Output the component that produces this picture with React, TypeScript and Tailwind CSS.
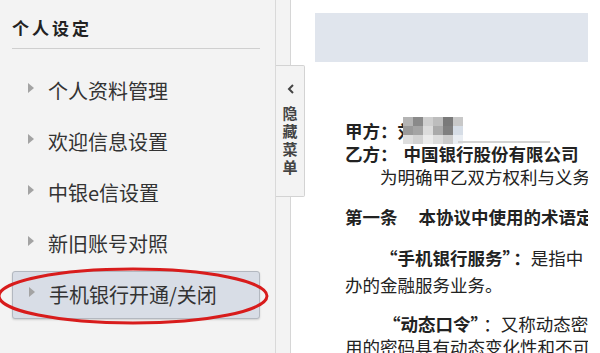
import React from "react";

const menuItems = ["个人资料管理", "欢迎信息设置", "中银e信设置", "新旧账号对照", "手机银行开通/关闭"];

const mosaic = [
  ["#b4b4b4", "#8a8a8a", "#cfcfcf", "#bdbdbd", "#7a7a7a", "#c8c8c8"],
  ["#9a9a9a", "#a4a4a4", "#dcdcdc", "#aaaaaa", "#808080", "#d6dde6"],
  ["#dedede", "#d2d2d2", "#ebebeb", "#dcdcdc", "#cbcbcb", "#e9edf2"],
];

function Triangle() {
  return <span className="mb-[7px] h-0 w-0 border-y-[5px] border-l-[6px] border-y-transparent border-l-[#a3a3a3]" />;
}

export default function App() {
  return (
    <div
      className="relative flex h-[353px] w-[600px] overflow-hidden bg-white text-[#222]"
      style={{ fontFamily: '"Noto Sans CJK SC", "Noto Sans", sans-serif' }}
    >
      {/* sidebar */}
      <aside className="relative w-[276px] shrink-0 border-r border-[#d9d9d9] bg-[#f3f3f3]">
        <div className="ml-[12px] w-[248px] border-b border-[#cfcfcf] pt-[16px] pb-[8px]">
          <h2 className="text-[17px] font-bold leading-[24px] tracking-[3px] text-[#222]">个人设定</h2>
        </div>
        <ul className="mt-[18px] flex flex-col gap-[3px]">
          {menuItems.map((item, i) => (
            <li
              key={item}
              className={`ml-[12px] flex h-[48px] w-[248px] items-center gap-[14px] rounded-[3px] pl-[16px] ${
                i === 4 ? "border border-[#b3b8c0] bg-[#d8dde6] shadow-[0_1px_2px_rgba(0,0,0,0.15)]" : ""
              }`}
            >
              <Triangle />
              <span className="text-[20px] leading-none text-[#333]">{item}</span>
            </li>
          ))}
        </ul>
        <svg className="absolute left-0 top-[264px]" width="276" height="64" viewBox="0 0 276 64">
          <ellipse cx="133" cy="32" rx="134" ry="27" fill="none" stroke="#d81c1c" strokeWidth="3" />
        </svg>
      </aside>

      {/* collapse strip */}
      <div className="w-[15px] shrink-0 border-r border-[#d6d6d6] bg-[#f3f3f3]" />

      {/* document */}
      <main className="flex-1 pt-[13px] pl-[24px]">
        <div className="w-[273px] overflow-hidden whitespace-nowrap text-[17.5px]">
          <div className="h-[49px] bg-[#e0e5ed]" />
          <div className="pl-[30px]">
            <div className="mt-[57px] leading-[23px] font-bold">
              甲方：
              <span className="relative">
                刘
                <span className="absolute left-[5px] top-[-1px] grid w-[60px] grid-cols-[repeat(6,10px)] blur-[0.7px]">
                  {mosaic.flat().map((c, i) => (
                    <span key={i} className="h-[9px] w-[10px]" style={{ background: c }} />
                  ))}
                </span>
                <span className="absolute left-[60px] top-[23px] h-[2px] w-[92px] bg-[#d3d3d3] blur-[0.5px]" />
              </span>
            </div>
            <div className="leading-[23px] font-bold">
              乙方：<span className="ml-[6px]">中国银行股份有限公司</span>
            </div>
            <div className="pl-[35px] leading-[23px]">为明确甲乙双方权利与义务</div>
            <div className="mt-[17px] leading-[23px] font-bold">
              第一条<span className="ml-[21px]">本协议中使用的术语定义</span>
            </div>
            <div className="mt-[18px] pl-[35px] leading-[23px]">
              <span className="font-bold">“手机银行服务”</span>
              <span className="ml-[2px] font-bold">：</span>
              <span>是指中</span>
            </div>
            <div className="mt-[4px] leading-[23px]">办的金融服务业务。</div>
            <div className="mt-[16px] pl-[38px] leading-[23px]">
              <span className="font-bold">“动态口令”</span>
              <span className="ml-[4px]">：</span>
              <span>又称动态密</span>
            </div>
            <div className="leading-[23px]">用的密码具有动态变化性和不可</div>
          </div>
        </div>
      </main>

      {/* hide menu tab */}
      <div className="absolute left-[276px] top-[65px] flex h-[132px] w-[29px] flex-col items-center rounded-r-[2px] border border-l-0 border-[#d3d3d3] bg-[#f3f3f3] pt-[18px]">
        <svg width="8" height="10" viewBox="0 0 8 10" className="ml-[1px]">
          <path d="M6 1 L2 5 L6 9" fill="none" stroke="#444" strokeWidth="2" />
        </svg>
        <div className="mt-[10px] flex flex-col items-center text-[15px] font-bold leading-[18px] text-[#444]">
          <span>隐</span>
          <span>藏</span>
          <span>菜</span>
          <span>单</span>
        </div>
      </div>
    </div>
  );
}
